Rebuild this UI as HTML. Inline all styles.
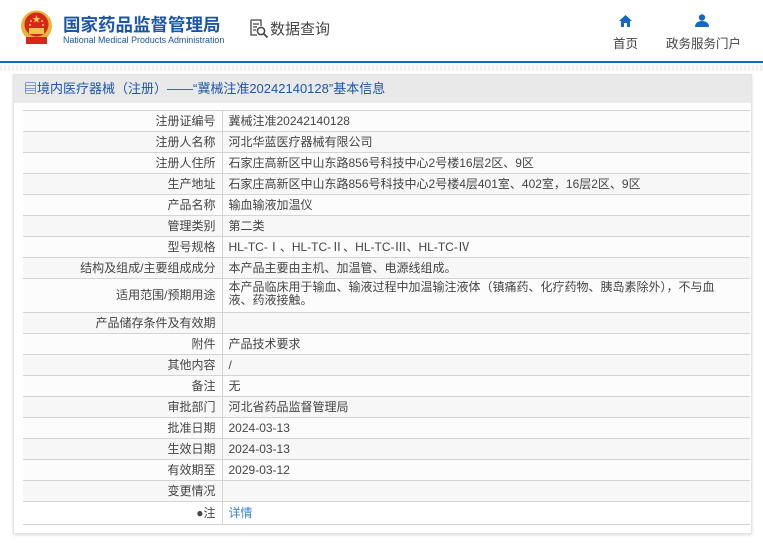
<!DOCTYPE html>
<html><head><meta charset="utf-8">
<style>
*{margin:0;padding:0;box-sizing:border-box}
body{width:763px;height:543px;background:#fff;font-family:"Liberation Sans","Noto Sans CJK SC",sans-serif;font-size:12px;color:#333;position:relative;overflow:hidden}
.hdr{position:absolute;left:0;top:0;width:763px;height:63px;border-bottom:2px solid #1467c5}
.stripe{position:absolute;left:0;top:65px;width:763px;height:6px;background:repeating-linear-gradient(90deg,#eee 0 2px,#fafafa 2px 4px)}
.panel{position:absolute;left:13px;top:74px;width:739px;height:460px;border:1px solid #e4e4e4;box-shadow:0 1px 3px #ddd;background:#fff}
.title{height:28px;background:#e9e9e9;color:#1d56a8;font-size:13px;line-height:28px;padding-left:10px}
table{position:absolute;left:9px;top:35px;width:727px;border-collapse:collapse}
td{border:1px solid #d4d4d4;height:21px;line-height:15px;padding:0 6px;font-size:12px;color:#444}
td.l{width:199px;text-align:right;padding-right:6px;border-left:none}
td.r{border-right:none}
tr:nth-child(even) td{background:#f7f7f7}
tr:nth-child(odd) td{background:#fcfcfd}
</style></head><body>
<div class="hdr">
<svg style="position:absolute;left:20px;top:10px" width="33" height="36" viewBox="0 0 33 36">
<circle cx="16.5" cy="16" r="15.5" fill="#e8b43a"/>
<circle cx="16.5" cy="14.5" r="12" fill="#d9261c"/>
<polygon points="16.5,5 17.5,8 20.5,8 18,9.8 19,12.8 16.5,11 14,12.8 15,9.8 12.5,8 15.5,8" fill="#f5d34a"/>
<circle cx="11" cy="11" r="1" fill="#f5d34a"/><circle cx="22" cy="11" r="1" fill="#f5d34a"/>
<circle cx="10" cy="15" r="1" fill="#f5d34a"/><circle cx="23" cy="15" r="1" fill="#f5d34a"/>
<rect x="9" y="18" width="15" height="6" fill="#f0c64a"/>
<rect x="6" y="27" width="21" height="7" fill="#d9261c"/>
</svg>
<div style="position:absolute;left:63px;top:12px;font-size:17.5px;font-weight:bold;color:#1a55a9">国家药品监督管理局</div>
<div style="position:absolute;left:63px;top:35px;font-size:8.9px;color:#1a55a9">National Medical Products Administration</div>
<svg style="position:absolute;left:249px;top:19px" width="20" height="20" viewBox="0 0 20 20"><path d="M2 1h10v6M2 1v15h6M4 5h6M4 8h4M4 11h3" stroke="#444" stroke-width="1.3" fill="none"/><circle cx="12" cy="12" r="3.6" stroke="#444" stroke-width="1.5" fill="none"/><path d="M14.5 14.5l4 4" stroke="#444" stroke-width="1.8"/></svg>
<div style="position:absolute;left:270px;top:18px;font-size:15px;color:#444">数据查询</div>
<svg style="position:absolute;left:619px;top:15px" width="13" height="12" viewBox="0 0 13 12"><path d="M6.5 0L13 6h-2v6H8V8H5v4H2V6H0z" fill="#1467c5"/></svg>
<div style="position:absolute;left:613px;top:33px;font-size:12.5px;color:#444">首页</div>
<svg style="position:absolute;left:695px;top:14px" width="14" height="13" viewBox="0 0 14 13"><circle cx="7" cy="3.5" r="3.2" fill="#1467c5"/><path d="M0 13c0-4 3-6 7-6s7 2 7 6z" fill="#1467c5"/></svg>
<div style="position:absolute;left:666px;top:33px;font-size:12.5px;color:#444">政务服务门户</div>
</div>
<div class="stripe"></div>
<div class="panel">
<div class="title">▤境内医疗器械（注册）——“冀械注准20242140128”基本信息</div>
<table>
<tr><td class="l">注册证编号</td><td class="r">冀械注准20242140128</td></tr>
<tr><td class="l">注册人名称</td><td class="r">河北华蓝医疗器械有限公司</td></tr>
<tr><td class="l">注册人住所</td><td class="r">石家庄高新区中山东路856号科技中心2号楼16层2区、9区</td></tr>
<tr><td class="l">生产地址</td><td class="r">石家庄高新区中山东路856号科技中心2号楼4层401室、402室，16层2区、9区</td></tr>
<tr><td class="l">产品名称</td><td class="r">输血输液加温仪</td></tr>
<tr><td class="l">管理类别</td><td class="r">第二类</td></tr>
<tr><td class="l">型号规格</td><td class="r">HL-TC-Ⅰ、HL-TC-Ⅱ、HL-TC-Ⅲ、HL-TC-Ⅳ</td></tr>
<tr><td class="l">结构及组成/主要组成成分</td><td class="r">本产品主要由主机、加温管、电源线组成。</td></tr>
<tr><td class="l" style="height:34px">适用范围/预期用途</td><td class="r" style="line-height:13px;padding-top:2px;padding-right:26px;vertical-align:top">本产品临床用于输血、输液过程中加温输注液体（镇痛药、化疗药物、胰岛素除外），不与血<br>液、药液接触。</td></tr>
<tr><td class="l">产品储存条件及有效期</td><td class="r"></td></tr>
<tr><td class="l">附件</td><td class="r">产品技术要求</td></tr>
<tr><td class="l">其他内容</td><td class="r">/</td></tr>
<tr><td class="l">备注</td><td class="r">无</td></tr>
<tr><td class="l">审批部门</td><td class="r">河北省药品监督管理局</td></tr>
<tr><td class="l">批准日期</td><td class="r">2024-03-13</td></tr>
<tr><td class="l">生效日期</td><td class="r">2024-03-13</td></tr>
<tr><td class="l">有效期至</td><td class="r">2029-03-12</td></tr>
<tr><td class="l">变更情况</td><td class="r"></td></tr>
<tr><td class="l" style="height:23px;background:#fff">●注</td><td class="r" style="color:#3b82d6;background:#fff">详情</td></tr>
</table>
</div>
</body></html>
